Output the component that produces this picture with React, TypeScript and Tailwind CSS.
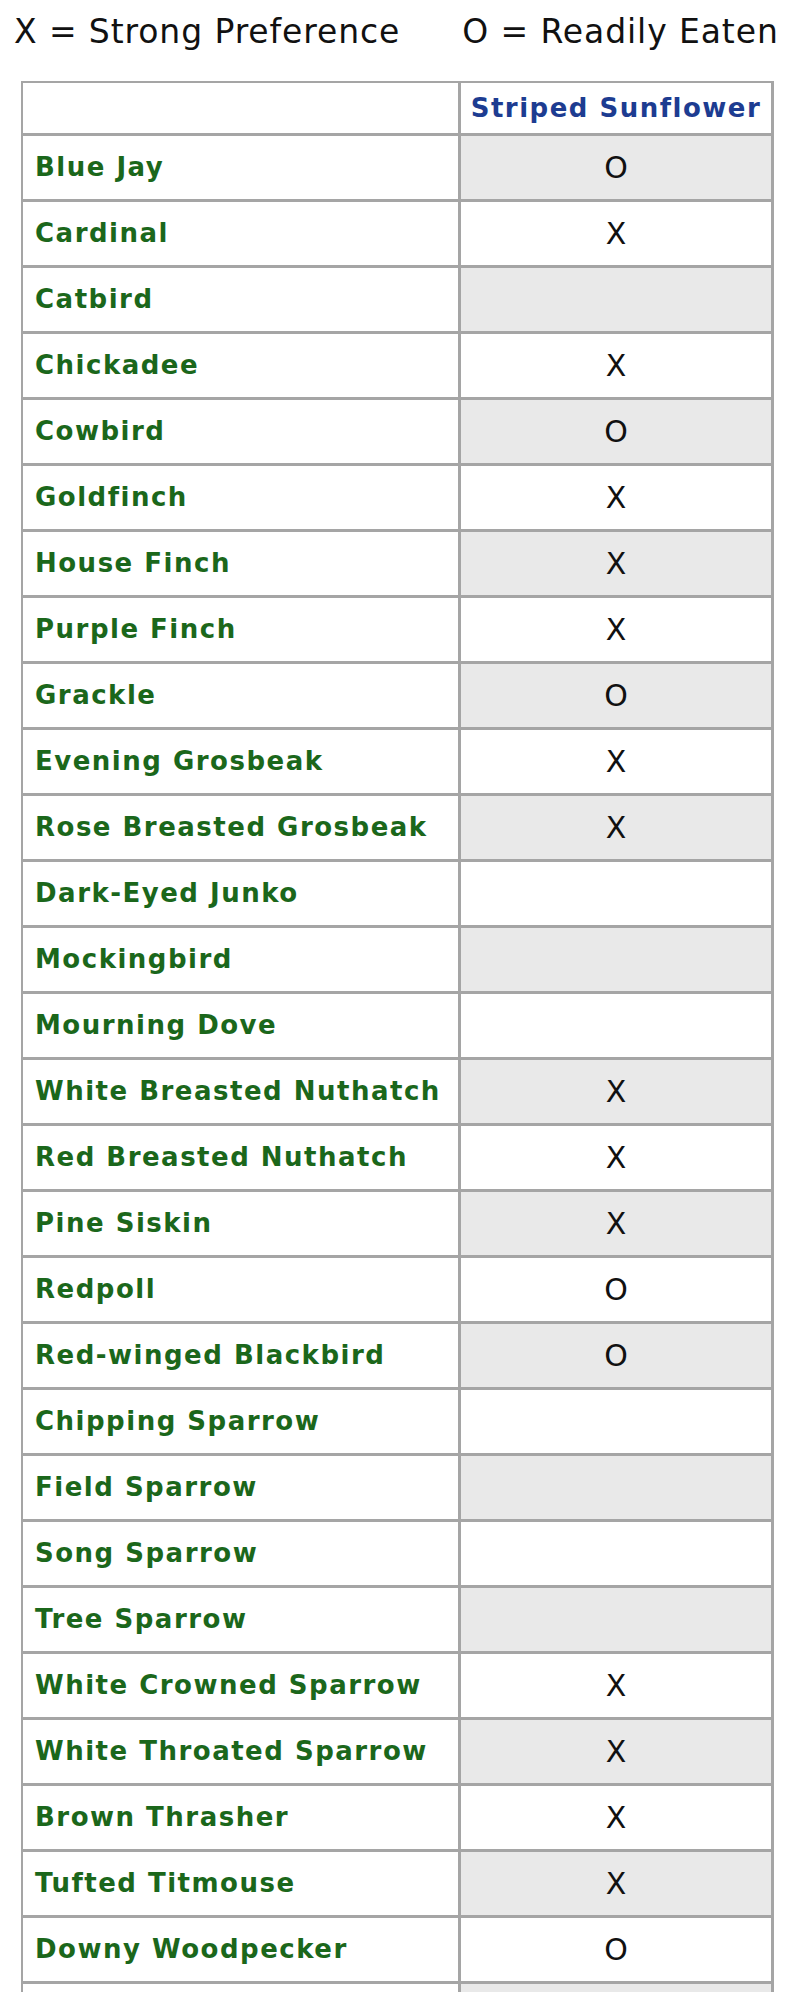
type Bird = { name: string; mark: '' | 'X' | 'O' };

const birds: Bird[] = [
  { name: 'Blue Jay', mark: 'O' },
  { name: 'Cardinal', mark: 'X' },
  { name: 'Catbird', mark: '' },
  { name: 'Chickadee', mark: 'X' },
  { name: 'Cowbird', mark: 'O' },
  { name: 'Goldfinch', mark: 'X' },
  { name: 'House Finch', mark: 'X' },
  { name: 'Purple Finch', mark: 'X' },
  { name: 'Grackle', mark: 'O' },
  { name: 'Evening Grosbeak', mark: 'X' },
  { name: 'Rose Breasted Grosbeak', mark: 'X' },
  { name: 'Dark-Eyed Junko', mark: '' },
  { name: 'Mockingbird', mark: '' },
  { name: 'Mourning Dove', mark: '' },
  { name: 'White Breasted Nuthatch', mark: 'X' },
  { name: 'Red Breasted Nuthatch', mark: 'X' },
  { name: 'Pine Siskin', mark: 'X' },
  { name: 'Redpoll', mark: 'O' },
  { name: 'Red-winged Blackbird', mark: 'O' },
  { name: 'Chipping Sparrow', mark: '' },
  { name: 'Field Sparrow', mark: '' },
  { name: 'Song Sparrow', mark: '' },
  { name: 'Tree Sparrow', mark: '' },
  { name: 'White Crowned Sparrow', mark: 'X' },
  { name: 'White Throated Sparrow', mark: 'X' },
  { name: 'Brown Thrasher', mark: 'X' },
  { name: 'Tufted Titmouse', mark: 'X' },
  { name: 'Downy Woodpecker', mark: 'O' },
  // next row runs past the bottom of the window; only its top edge shows
  { name: '', mark: '' },
];

export default function App() {
  return (
    <div className="min-h-screen bg-white font-['DejaVu_Sans',Verdana,sans-serif] text-black">
      <div className="flex gap-[62px] pl-[14px] pt-[16px] text-[33px] leading-[32px] tracking-[0.9px] text-[#111]">
        <span>X = Strong Preference</span>
        <span>O = Readily Eaten</span>
      </div>

      <table className="ml-[21px] mt-[33px] w-[753px] border-separate border-spacing-0 border-l-2 border-t-2 border-[#a5a5a5]">
        <thead>
          <tr className="h-[53px]">
            <th className="w-[438px] border-b-[3px] border-r-[3px] border-[#a5a5a5] bg-white" />
            <th className="border-b-[3px] border-r-[3px] border-[#a5a5a5] bg-white text-center text-[26px] font-bold tracking-[1.5px] text-[#1d3c91]">
              Striped Sunflower
            </th>
          </tr>
        </thead>
        <tbody>
          {birds.map((bird, index) => (
            <tr key={bird.name || `row-${index}`} className="h-[66px]">
              <td className="border-b-[3px] border-r-[3px] border-[#a5a5a5] bg-white pl-[12px] text-left text-[26px] font-bold tracking-[1.5px] text-[#1b671b]">
                {bird.name}
              </td>
              <td
                className={`border-b-[3px] border-r-[3px] border-[#a5a5a5] text-center text-[30px] text-[#111] ${
                  index % 2 === 0 ? 'bg-[#e9e9e9]' : 'bg-white'
                }`}
              >
                {bird.mark}
              </td>
            </tr>
          ))}
        </tbody>
      </table>
    </div>
  );
}
